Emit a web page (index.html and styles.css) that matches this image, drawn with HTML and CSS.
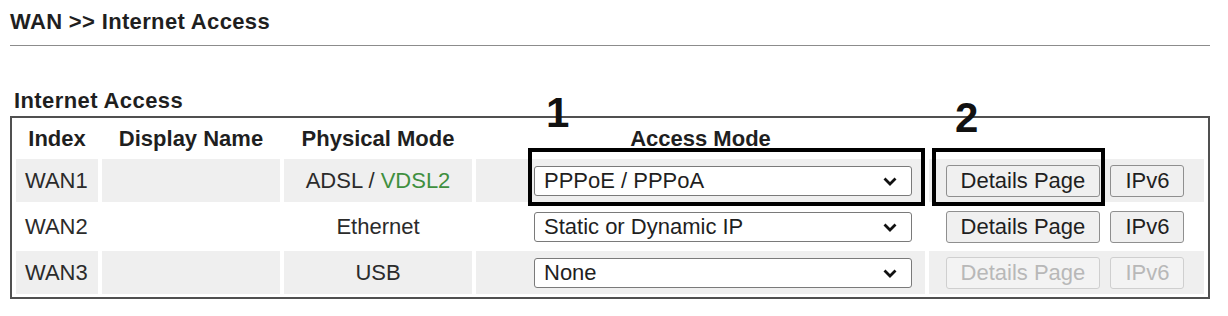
FILE: index.html
```html
<!DOCTYPE html>
<html lang="en">
<head>
  <meta charset="UTF-8" />
  <title>WAN &gt;&gt; Internet Access</title>
  <link rel="stylesheet" href="styles.css">
</head>
<body>

  <h1 class="page-title">WAN &gt;&gt; Internet Access</h1>

  <h2 class="section-title">Internet Access</h2>

  <div class="wan-panel">
    <table class="wan-table">
      <thead>
        <tr>
          <th class="col-index">Index</th>
          <th class="col-name">Display Name</th>
          <th class="col-phys">Physical Mode</th>
          <th class="col-access">Access Mode</th>
          <th class="col-actions"></th>
        </tr>
      </thead>
      <tbody>
        <tr class="shaded">
          <td class="cell-index">WAN1</td>
          <td></td>
          <td class="cell-phys">ADSL / <span class="vdsl">VDSL2</span></td>
          <td class="cell-access">
            <span class="select-wrap">
              <select class="mode-select">
                <option>PPPoE / PPPoA</option>
              </select>
              <svg class="chevron" width="14" height="9" viewBox="0 0 14 9"><path d="M1.5 1.5 L7 7 L12.5 1.5" fill="none" stroke="#111" stroke-width="2.8"/></svg>
            </span>
          </td>
          <td class="cell-actions">
            <button class="btn">Details Page</button>
            <button class="btn">IPv6</button>
          </td>
        </tr>
        <tr>
          <td class="cell-index">WAN2</td>
          <td></td>
          <td class="cell-phys">Ethernet</td>
          <td class="cell-access">
            <span class="select-wrap">
              <select class="mode-select">
                <option>Static or Dynamic IP</option>
              </select>
              <svg class="chevron" width="14" height="9" viewBox="0 0 14 9"><path d="M1.5 1.5 L7 7 L12.5 1.5" fill="none" stroke="#111" stroke-width="2.8"/></svg>
            </span>
          </td>
          <td class="cell-actions">
            <button class="btn">Details Page</button>
            <button class="btn">IPv6</button>
          </td>
        </tr>
        <tr class="shaded">
          <td class="cell-index">WAN3</td>
          <td></td>
          <td class="cell-phys">USB</td>
          <td class="cell-access">
            <span class="select-wrap">
              <select class="mode-select">
                <option>None</option>
              </select>
              <svg class="chevron" width="14" height="9" viewBox="0 0 14 9"><path d="M1.5 1.5 L7 7 L12.5 1.5" fill="none" stroke="#111" stroke-width="2.8"/></svg>
            </span>
          </td>
          <td class="cell-actions">
            <button class="btn" disabled>Details Page</button>
            <button class="btn" disabled>IPv6</button>
          </td>
        </tr>
      </tbody>
    </table>

    <!-- annotation boxes drawn over the table -->
    <div class="callout callout-1"></div>
    <div class="callout callout-2"></div>
    <span class="callout-num num-1">1</span>
    <span class="callout-num num-2">2</span>
  </div>

</body>
</html>
```

FILE: styles.css
```css
body {
  margin: 0;
  padding: 0;
  font-family: 'Liberation Sans', Arial, sans-serif;
  font-size: 22px;
  color: #2b2b2b;
  background: #fff;
}

.page-title {
  margin: 0 18px 0 10px;
  padding: 9px 0 10px;
  font-size: 22px;
  line-height: 26px;
  font-weight: bold;
  letter-spacing: 0.35px;
  color: #1f1f1f;
  border-bottom: 1px solid #8c8c8c;
}

.section-title {
  margin: 42px 0 2px 14px;
  font-size: 22px;
  line-height: 26px;
  font-weight: bold;
  letter-spacing: 0.4px;
  color: #1f1f1f;
}

.wan-panel {
  position: relative;
  margin-left: 10px;
  width: 1200px;
}

.wan-table {
  width: 1200px;
  border: 2px solid #505050;
  border-collapse: separate;
  border-spacing: 4px 3px;
  table-layout: fixed;
}

.wan-table th {
  height: 35px;
  padding: 0;
  font-weight: bold;
  color: #1f1f1f;
  text-align: center;
}

.col-index { width: 82px; }
.col-name { width: 178px; }
.col-phys { width: 188px; }
.col-access { width: 449px; }

.wan-table td {
  height: 43px;
  padding: 0;
}

.shaded td {
  background: #efefef;
}

.cell-index {
  padding-left: 9px !important;
}

.cell-phys {
  text-align: center;
}

.vdsl {
  color: #3f8f3f;
}

.cell-access {
  padding-left: 58px !important;
}

.cell-actions {
  text-align: center;
  padding-right: 3px !important;
}

.select-wrap {
  position: relative;
  display: inline-block;
  vertical-align: middle;
}

.mode-select {
  -webkit-appearance: none;
  appearance: none;
  width: 378px;
  height: 30px;
  padding: 0 30px 0 9px;
  font-family: inherit;
  font-size: 22px;
  color: #1f1f1f;
  background: #fff;
  border: 1px solid #7a7a7a;
  border-radius: 3px;
}

.chevron {
  position: absolute;
  right: 15px;
  top: 11px;
  pointer-events: none;
}

.btn {
  height: 32px;
  padding: 0 14px;
  margin: 0 2px;
  font-family: inherit;
  font-size: 22px;
  color: #1f1f1f;
  background: #f0f0f0;
  border: 1px solid #8f8f8f;
  border-radius: 3px;
  vertical-align: middle;
}

.btn:disabled {
  color: #b8b8b8;
  border-color: #cfcfcf;
  background: #f3f3f3;
}

/* Annotation boxes */
.callout {
  position: absolute;
  top: 32px;
  height: 50px;
  border: 4px solid #000;
}

.callout-1 {
  left: 518px;
  width: 389px;
}

.callout-2 {
  left: 922px;
  width: 165px;
}

.callout-num {
  position: absolute;
  font-size: 42px;
  line-height: 42px;
  font-weight: bold;
  color: #111;
}

.num-1 {
  left: 536px;
  top: -24px;
}

.num-2 {
  left: 945px;
  top: -19px;
}
```
